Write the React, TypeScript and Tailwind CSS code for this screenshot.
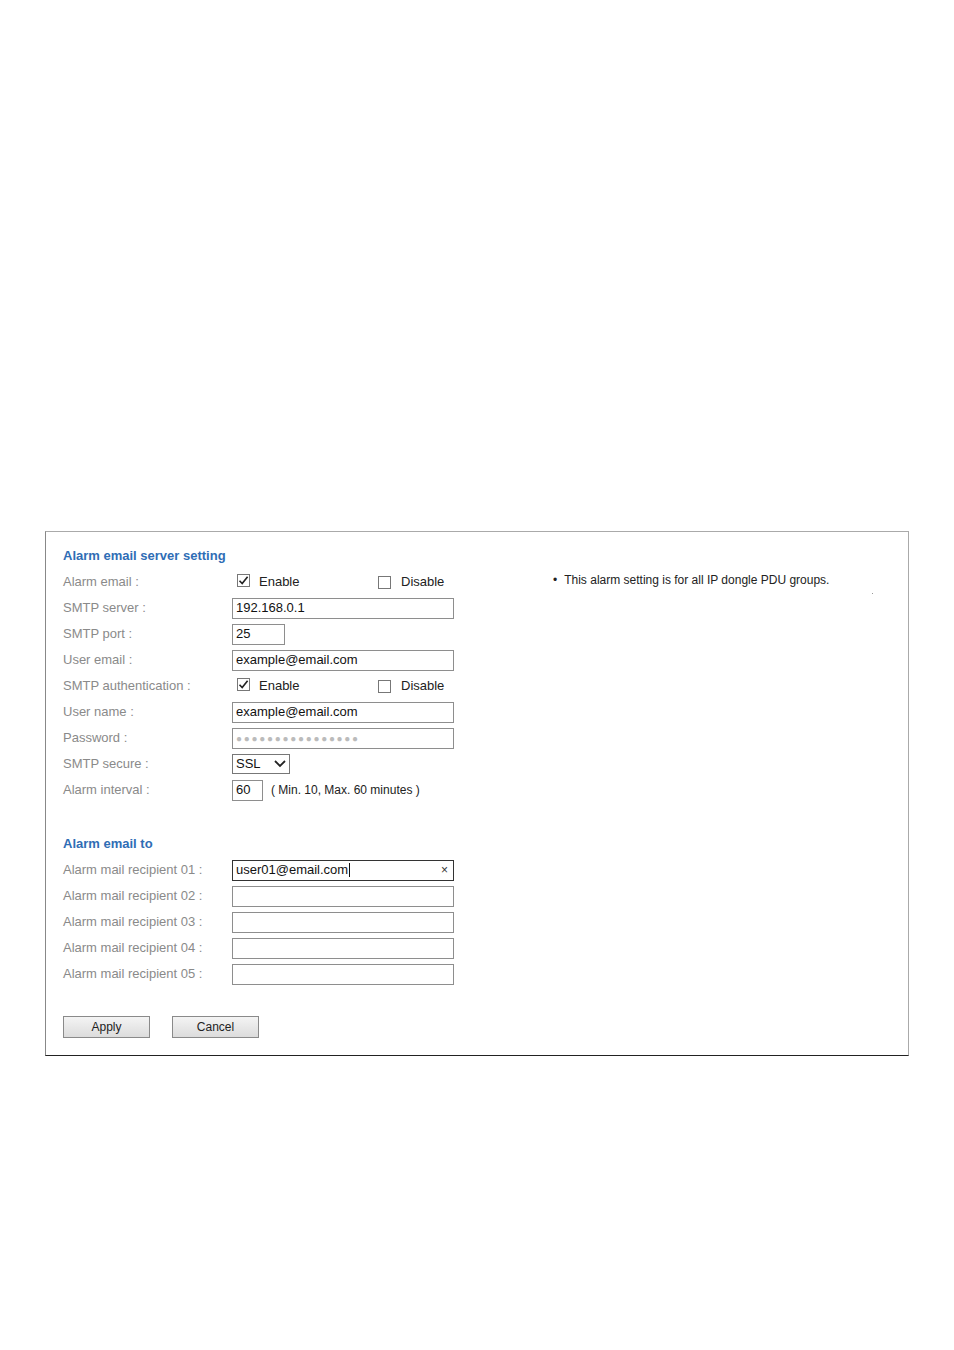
import React from "react";

const FONT = { fontFamily: '"Liberation Sans", Arial, sans-serif' };

function Check({ checked }: { checked: boolean }) {
  return (
    <span className="relative inline-block h-[13px] w-[13px] border border-[#777] bg-white">
      {checked && (
        <svg viewBox="0 0 13 13" className="absolute -left-px -top-px h-[13px] w-[13px]">
          <path d="M2.5 6.8 L5.2 9.6 L10.6 2.8" fill="none" stroke="#222" strokeWidth="1.6" />
        </svg>
      )}
    </span>
  );
}

function Radio({ on }: { on: boolean }) {
  return (
    <div className="flex items-center">
      <div className="flex w-[146px] items-center">
        <span className="ml-[5px]"><Check checked={on} /></span>
        <span className="ml-[9px] text-[13px] text-[#222]">Enable</span>
      </div>
      <div className="flex items-center">
        <Check checked={!on} />
        <span className="ml-[10px] text-[13px] text-[#222]">Disable</span>
      </div>
    </div>
  );
}

function Box({ w = "w-[222px]", value, dark, children }: { w?: string; value?: string; dark?: boolean; children?: React.ReactNode }) {
  return (
    <div className={`flex h-[21px] items-center border ${dark ? "border-[#333]" : "border-[#8e8e8e]"} bg-white px-[3px] text-[13px] text-[#111] ${w}`}>
      {value}
      {children}
    </div>
  );
}

function Row({ label, children }: { label: string; children: React.ReactNode }) {
  return (
    <div className="flex h-[26px] items-center">
      <div className="w-[169px] text-[13px] text-[#8a8a8a]">{label}</div>
      {children}
    </div>
  );
}

export default function App() {
  return (
    <div className="min-h-[1350px] w-[954px] bg-white" style={FONT}>
      <div className="h-[531px]" />
      <div className="ml-[45px] flex h-[525px] w-[864px] border-t border-l border-r border-b border-t-[#aaa] border-l-[#888] border-r-[#aaa] border-b-[#222]">
        <div className="pl-[17px] pt-[16px]">
          <div className="h-[16px] text-[13px] font-bold leading-[16px] text-[#2f6db5]">Alarm email server setting</div>
          <div className="mt-[5px]">
            <Row label="Alarm email :"><Radio on /></Row>
            <Row label="SMTP server :"><Box value="192.168.0.1" /></Row>
            <Row label="SMTP port :"><Box w="w-[53px]" value="25" /></Row>
            <Row label="User email :"><Box value="example@email.com" /></Row>
            <Row label="SMTP authentication :"><Radio on /></Row>
            <Row label="User name :"><Box value="example@email.com" /></Row>
            <Row label="Password :">
              <Box>
                <span className="text-[10px] tracking-[1.7px] text-[#bbb]">●●●●●●●●●●●●●●●●</span>
              </Box>
            </Row>
            <Row label="SMTP secure :">
              <div className="flex h-[20px] w-[58px] items-center justify-between border border-[#777] bg-white pl-[3px] pr-[3px] text-[13px] text-[#111]">
                SSL
                <svg viewBox="0 0 12 8" className="h-[8px] w-[12px]">
                  <path d="M1 1 L6 6 L11 1" fill="none" stroke="#222" strokeWidth="1.8" />
                </svg>
              </div>
            </Row>
            <Row label="Alarm interval :">
              <Box w="w-[31px]" value="60" />
              <span className="ml-[8px] text-[12px] text-[#222]">( Min. 10, Max. 60 minutes )</span>
            </Row>
          </div>

          <div className="mt-[33px] h-[16px] text-[13px] font-bold leading-[16px] text-[#2f6db5]">Alarm email to</div>
          <div className="mt-[5px]">
            <Row label="Alarm mail recipient 01 :">
              <Box dark>
                <span>user01@email.com</span>
                <span className="ml-px inline-block h-[14px] w-px bg-[#111]" />
                <span className="ml-auto mr-[2px] text-[12px] text-[#333]">×</span>
              </Box>
            </Row>
            <Row label="Alarm mail recipient 02 :"><Box /></Row>
            <Row label="Alarm mail recipient 03 :"><Box /></Row>
            <Row label="Alarm mail recipient 04 :"><Box /></Row>
            <Row label="Alarm mail recipient 05 :"><Box /></Row>
          </div>

          <div className="mt-[29px] flex gap-[22px]">
            <button className="h-[22px] w-[87px] border border-[#8a8a8a] bg-gradient-to-b from-[#f4f4f4] to-[#dcdcdc] text-[12px] text-[#222]">Apply</button>
            <button className="h-[22px] w-[87px] border border-[#8a8a8a] bg-gradient-to-b from-[#f4f4f4] to-[#dcdcdc] text-[12px] text-[#222]">Cancel</button>
          </div>
        </div>

        <div className="ml-[99px] pt-[39px]">
          <div className="flex items-center text-[12px] text-[#222]">
            <span className="mr-[7px]">•</span>
            This alarm setting is for all IP dongle PDU groups.
          </div>
          <div className="ml-[319px] mt-[4px] h-px w-px bg-[#999]" />
        </div>
      </div>
    </div>
  );
}
